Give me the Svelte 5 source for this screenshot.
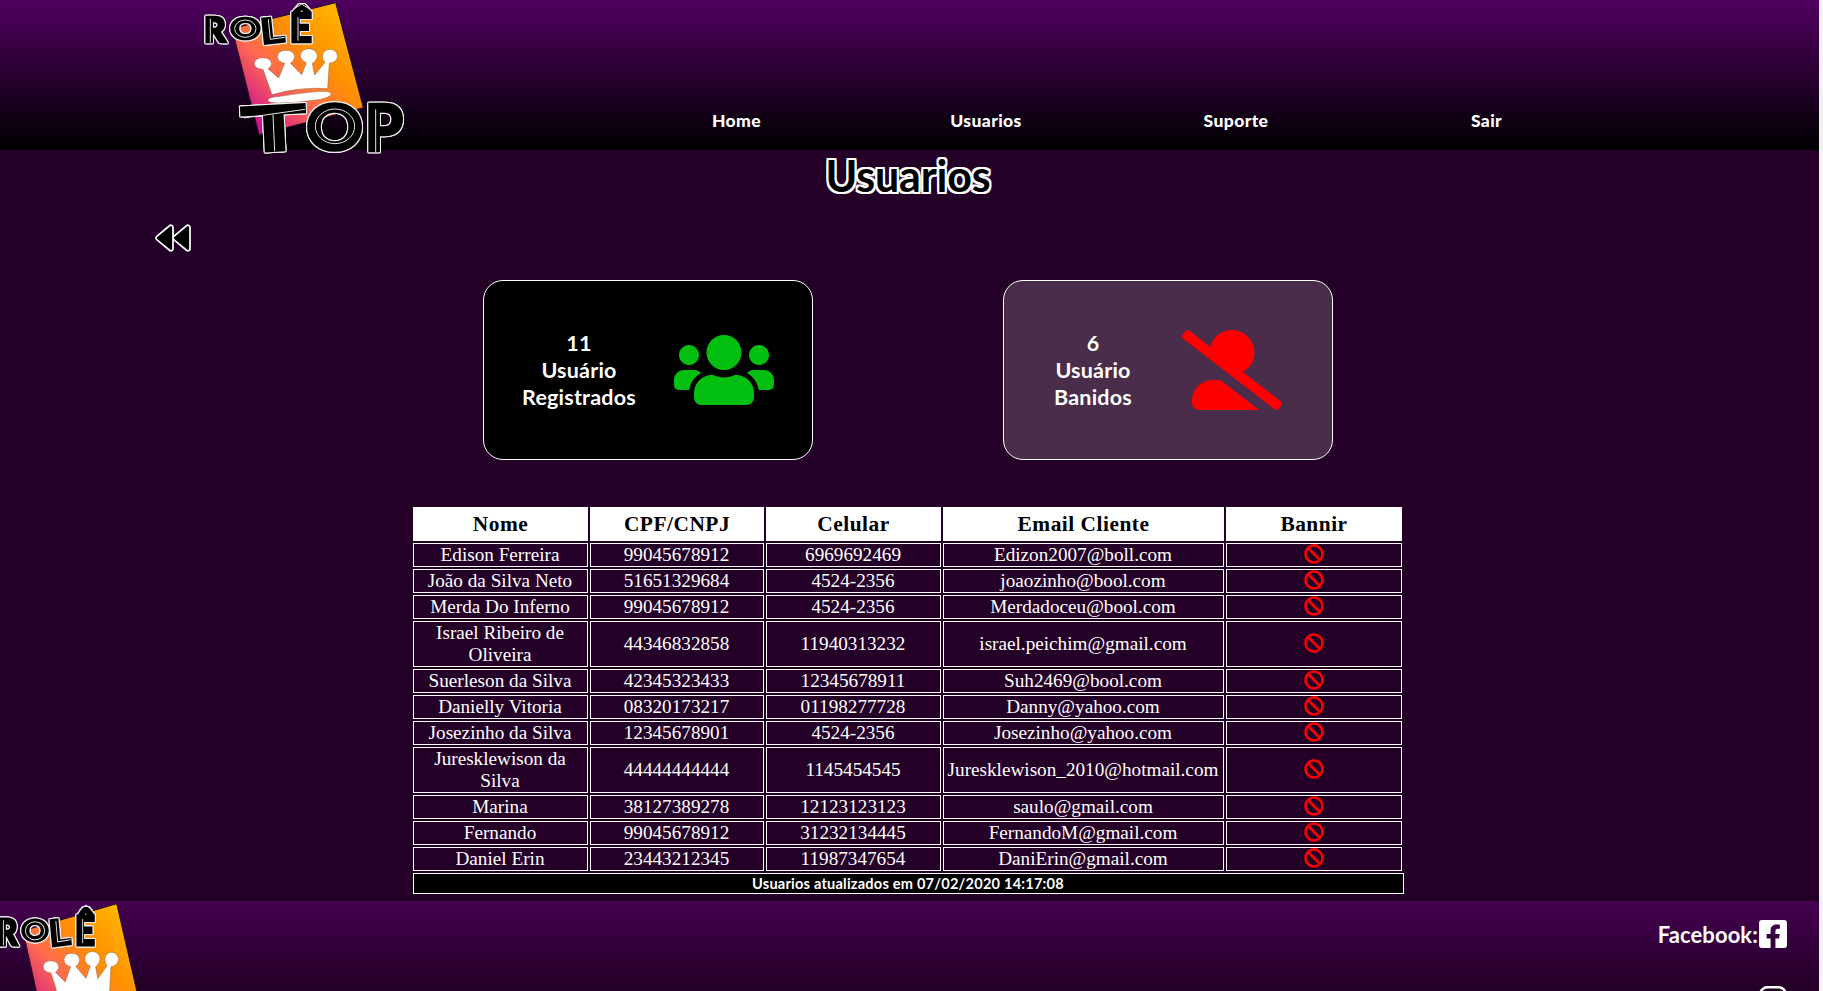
<script>
  const menu = ['Home', 'Usuarios', 'Suporte', 'Sair'];
  const headings = ['Nome', 'CPF/CNPJ', 'Celular', 'Email Cliente', 'Bannir'];
  const users = [
    ['Edison Ferreira', '99045678912', '6969692469', 'Edizon2007@boll.com'],
    ['João da Silva Neto', '51651329684', '4524-2356', 'joaozinho@bool.com'],
    ['Merda Do Inferno', '99045678912', '4524-2356', 'Merdadoceu@bool.com'],
    ['Israel Ribeiro de Oliveira', '44346832858', '11940313232', 'israel.peichim@gmail.com'],
    ['Suerleson da Silva', '42345323433', '12345678911', 'Suh2469@bool.com'],
    ['Danielly Vitoria', '08320173217', '01198277728', 'Danny@yahoo.com'],
    ['Josezinho da Silva', '12345678901', '4524-2356', 'Josezinho@yahoo.com'],
    ['Juresklewison da Silva', '44444444444', '1145454545', 'Juresklewison_2010@hotmail.com'],
    ['Marina', '38127389278', '12123123123', 'saulo@gmail.com'],
    ['Fernando', '99045678912', '31232134445', 'FernandoM@gmail.com'],
    ['Daniel Erin', '23443212345', '11987347654', 'DaniErin@gmail.com']
  ];
</script>

{#snippet logo(id)}
  <svg class="logo" viewBox="0 0 690 480" preserveAspectRatio="none">
    <defs>
      <linearGradient id={id} x1="0" y1="1" x2="1" y2="0">
        <stop offset="0.08" stop-color="#c4009c" />
        <stop offset="0.4" stop-color="#ff6a50" />
        <stop offset="0.62" stop-color="#ff9000" />
        <stop offset="1" stop-color="#ffc400" />
      </linearGradient>
    </defs>
    <path d="M126 86L437 8L520 323L207 404Z" fill="url(#{id})" stroke="#201020" stroke-width="3" />
    <g fill="#fff" stroke="#8a5a3a" stroke-width="1.5">
      <path d="M246 284L219 208Q192 206 193 189Q196 173 219 173Q243 174 245 191Q244 201 234 206L266 234L284 190Q262 186 262 169Q265 151 288 151Q312 152 314 170Q313 183 301 189L335 224L349 188Q331 181 331 166Q334 147 356 146Q379 147 382 167Q381 182 367 190L374 225L405 187Q397 180 397 168Q400 149 420 148Q441 150 443 169Q441 187 418 190L413 266Q330 260 246 284Z" />
      <path d="M233 300Q239 291 270 289Q335 278 390 274Q423 272 424 283Q416 297 370 301Q310 309 265 309Q234 309 233 300Z" />
    </g>
    <g class="letters">
      <text x="43" y="127" font-size="103" textLength="64" lengthAdjust="spacingAndGlyphs">R</text>
      <text x="122" y="116" font-size="84" textLength="88" lengthAdjust="spacingAndGlyphs">O</text>
      <text x="217" y="131" font-size="102" textLength="68" lengthAdjust="spacingAndGlyphs" transform="rotate(-6 217 131)">L</text>
      <text x="299" y="127" font-size="118" textLength="66" lengthAdjust="spacingAndGlyphs">Ê</text>
      <text x="156" y="452" font-size="184" textLength="193" lengthAdjust="spacingAndGlyphs" transform="rotate(-3 250 390)">T</text>
      <text x="349" y="450" font-size="186" textLength="170" lengthAdjust="spacingAndGlyphs">O</text>
      <text x="525" y="452" font-size="192" textLength="114" lengthAdjust="spacingAndGlyphs">P</text>
    </g>
    <g class="inlines">
      <path d="M61 56V128M235 58L241 118L284 112M324 52V122M313 26L335 12L357 26M162 354L345 328M249 344L254 454M557 328V456" />
      <ellipse cx="166" cy="86" rx="32" ry="26" />
      <ellipse cx="435" cy="379" rx="59" ry="52" />
    </g>
  </svg>
{/snippet}

<div class="page">
  <header>
    <div class="brand">{@render logo('flameTop')}</div>
    <nav>
      {#each menu as item}<a href="#{item}">{item}</a>{/each}
    </nav>
  </header>

  <main>
    <h1>Usuarios</h1>
    <a class="back" href="#Home" aria-label="Voltar">
      <svg viewBox="0 0 512 512"><path d="M11.5 280.6l192 160c20.6 17.2 52.5 2.8 52.5-24.6V96c0-27.4-31.9-41.8-52.5-24.6l-192 160c-15.3 12.8-15.3 36.4 0 49.2zm256 0l192 160c20.6 17.2 52.5 2.8 52.5-24.6V96c0-27.4-31.9-41.8-52.5-24.6l-192 160c-15.3 12.8-15.3 36.4 0 49.2z" /></svg>
    </a>

    <section class="cards">
      <div class="card registered">
        <p>11<br />Usuário<br />Registrados</p>
        <svg viewBox="0 0 640 512"><path d="M96 224c35.3 0 64-28.7 64-64s-28.7-64-64-64-64 28.7-64 64 28.7 64 64 64zm448 0c35.3 0 64-28.7 64-64s-28.7-64-64-64-64 28.7-64 64 28.7 64 64 64zm32 32h-64c-17.6 0-33.5 7.1-45.1 18.6 40.3 22.1 68.9 62 75.1 109.4h66c17.7 0 32-14.3 32-32v-32c0-35.3-28.7-64-64-64zm-256 0c61.9 0 112-50.1 112-112S381.9 32 320 32 208 82.1 208 144s50.1 112 112 112zm76.8 32h-8.3c-20.8 10-43.9 16-68.5 16s-47.6-6-68.5-16h-8.3C179.6 288 128 339.6 128 403.2V432c0 26.5 21.5 48 48 48h288c26.5 0 48-21.5 48-48v-28.8c0-63.6-51.6-115.2-115.2-115.2zm-223.7-13.4C161.5 263.1 145.6 256 128 256H64c-35.3 0-64 28.7-64 64v32c0 17.7 14.3 32 32 32h65.9c6.3-47.4 34.9-87.3 75.2-109.4z" /></svg>
      </div>
      <div class="card banned">
        <p>6<br />Usuário<br />Banidos</p>
        <svg viewBox="0 0 640 512"><path d="M633.8 458.1L389.6 269.3C433.8 244.7 464 198.1 464 144 464 64.5 399.5 0 320 0c-67.1 0-123 46.1-139 108.2L45.5 3.4C38.5-2 28.4-.8 23 6.2L3.4 31.4c-5.4 7-4.2 17 2.8 22.4l588.4 454.7c7 5.4 17 4.2 22.5-2.8l19.6-25.3c5.4-7 4.1-17-2.9-22.3zM198.4 320C124.2 320 64 380.2 64 454.4v9.6c0 26.5 21.5 48 48 48h382.2L245.8 320h-47.4z" /></svg>
      </div>
    </section>

    <table>
      <colgroup>
        <col class="c175" /><col class="c174" /><col class="c175" /><col class="c281" /><col class="c176" /><col class="c0" />
      </colgroup>
      <thead>
        <tr>{#each headings as h}<th>{h}</th>{/each}</tr>
      </thead>
      <tbody>
        {#each users as user}
          <tr>
            {#each user as value}<td>{value}</td>{/each}
            <td class="ban">
              <svg viewBox="0 0 512 512"><path d="M256 8C119.034 8 8 119.033 8 256s111.034 248 248 248 248-111.034 248-248S392.967 8 256 8zm130.108 117.892c65.448 65.448 70 165.481 20.677 235.637L150.47 105.216c70.204-49.356 170.226-44.735 235.638 20.676zM125.892 386.108c-65.448-65.448-70-165.481-20.677-235.637L361.53 406.784c-70.203 49.356-170.226 44.736-235.638-20.676z" /></svg>
            </td>
          </tr>
        {/each}
      </tbody>
      <tfoot>
        <tr><td colspan="6">Usuarios atualizados em 07/02/2020 14:17:08</td></tr>
      </tfoot>
    </table>
  </main>

  <footer>
    <div class="brand">{@render logo('flameBottom')}</div>
    <div class="social">
      <a href="#facebook"><span>Facebook:</span>
        <svg viewBox="0 32 448 448"><path d="M400 32H48A48 48 0 0 0 0 80v352a48 48 0 0 0 48 48h137.25V327.69h-63V256h63v-54.64c0-62.15 37-96.48 93.67-96.48 27.14 0 55.52 4.84 55.52 4.84v61h-31.27c-30.81 0-40.42 19.12-40.42 38.73V256h68.78l-11 71.69h-57.78V480H400a48 48 0 0 0 48-48V80a48 48 0 0 0-48-48z" /></svg>
      </a>
      <a href="#instagram" aria-label="Instagram">
        <svg viewBox="0 0 28 28"><g fill="none" stroke="#fff" stroke-width="2.6"><rect x="1.3" y="1.3" width="25.4" height="25.4" rx="7" /><circle cx="14" cy="14" r="5.8" /></g><circle cx="21.5" cy="6.5" r="1.7" /></svg>
      </a>
    </div>
  </footer>
</div>

<style>
  :global(body) { margin: 0; background: #f1f1f1; overflow: hidden; }
  * { box-sizing: border-box; }
  .page {
    display: flex;
    flex-direction: column;
    width: 1819px;
    height: 991px;
    overflow: hidden;
    background: #240028;
    color: #fff;
    font-family: Lato, sans-serif;
  }
  a { color: #fff; text-decoration: none; }
  .logo { display: block; width: 100%; height: 100%; overflow: visible; }
  .letters {
    font-family: Lato, sans-serif;
    font-weight: 900;
    fill: #000;
    stroke: #000;
    stroke-width: 8;
    filter: drop-shadow(3px 0 #eee) drop-shadow(-3px 0 #eee) drop-shadow(0 3px #eee) drop-shadow(0 -3px #eee);
  }
  .inlines { fill: none; stroke: #e6e6e6; stroke-width: 3; }

  header {
    display: flex;
    flex: none;
    height: 150px;
    padding-left: 190px;
    background: linear-gradient(#500060, #000);
  }
  header .brand { width: 230px; height: 160px; flex: none; position: relative; }
  nav { display: grid; grid-template-columns: 249px 250px 250px 251px; margin-left: 192px; padding-top: 110px; text-align: center; }
  nav a { font-size: 17.5px; font-weight: 900; line-height: 22px; letter-spacing: 0.4px; }

  main { height: 751px; flex: none; }
  h1 {
    margin: 0;
    height: 71px;
    font-size: 43px;
    line-height: 52px;
    font-weight: 700;
    letter-spacing: -0.2px;
    text-indent: -3px;
    text-align: center;
    color: #000;
    text-shadow: -2px 0 #fff, 2px 0 #fff, 0 -2px #fff, 0 2px #fff, -2px -2px #fff, 2px -2px #fff, -2px 2px #fff, 2px 2px #fff;
  }
  .back { display: block; width: 36px; height: 36px; margin: 0 0 23px 155px; }
  .back svg { display: block; width: 36px; height: 34px; overflow: visible; fill: #000; stroke: #fff; stroke-width: 26; }

  .cards { display: flex; gap: 190px; padding-left: 483px; }
  .card { display: flex; align-items: center; width: 330px; height: 180px; border: 1px solid #fff; border-radius: 20px; }
  .registered { background: #000; }
  .banned { background: #4a2d4b; }
  .card p { margin: 0; text-align: center; font-size: 21.5px; line-height: 27px; font-weight: 700; letter-spacing: 0.2px; }
  .registered p { width: 190px; }
  .banned p { width: 178px; }
  .card svg { width: 100px; height: 80px; }
  .registered svg { fill: #03bf12; }
  .banned svg { fill: #f00; }

  table {
    width: 995px;
    margin: 45px 0 0 411px;
    table-layout: fixed;
    border-collapse: separate;
    border-spacing: 2px;
    font-family: "Liberation Serif", serif;
    font-size: 19.2px;
    line-height: 22px;
    text-align: center;
  }
  .c175 { width: 175px; }
  .c174 { width: 174px; }
  .c281 { width: 281px; }
  .c176 { width: 176px; }
  .c0 { width: 0; }
  th { height: 34px; padding: 0; background: #fff; color: #000; font-size: 21.4px; letter-spacing: 0.5px; }
  td { padding: 0 2px 0 1px; border: 1px solid #fff; }
  .ban svg { display: block; width: 20px; height: 20px; margin: -2px auto 0; fill: #f00; }
  tfoot td { height: 21px; background: #000; font: 700 14.6px/19px Lato, sans-serif; letter-spacing: 0.2px; }

  footer { display: flex; justify-content: space-between; height: 90px; flex: none; overflow: hidden; background: linear-gradient(#450050, #220026); }
  footer .brand { width: 208px; height: 166px; margin-left: -15px; flex: none; }
  .social { display: flex; flex-direction: column; align-items: flex-end; gap: 38px; padding: 19px 32px 0 0; }
  .social a { display: flex; align-items: center; font-size: 22px; font-weight: 700; gap: 1px; letter-spacing: 0.1px; }
  .social svg { display: block; width: 28px; height: 28px; fill: #fff; }
</style>
